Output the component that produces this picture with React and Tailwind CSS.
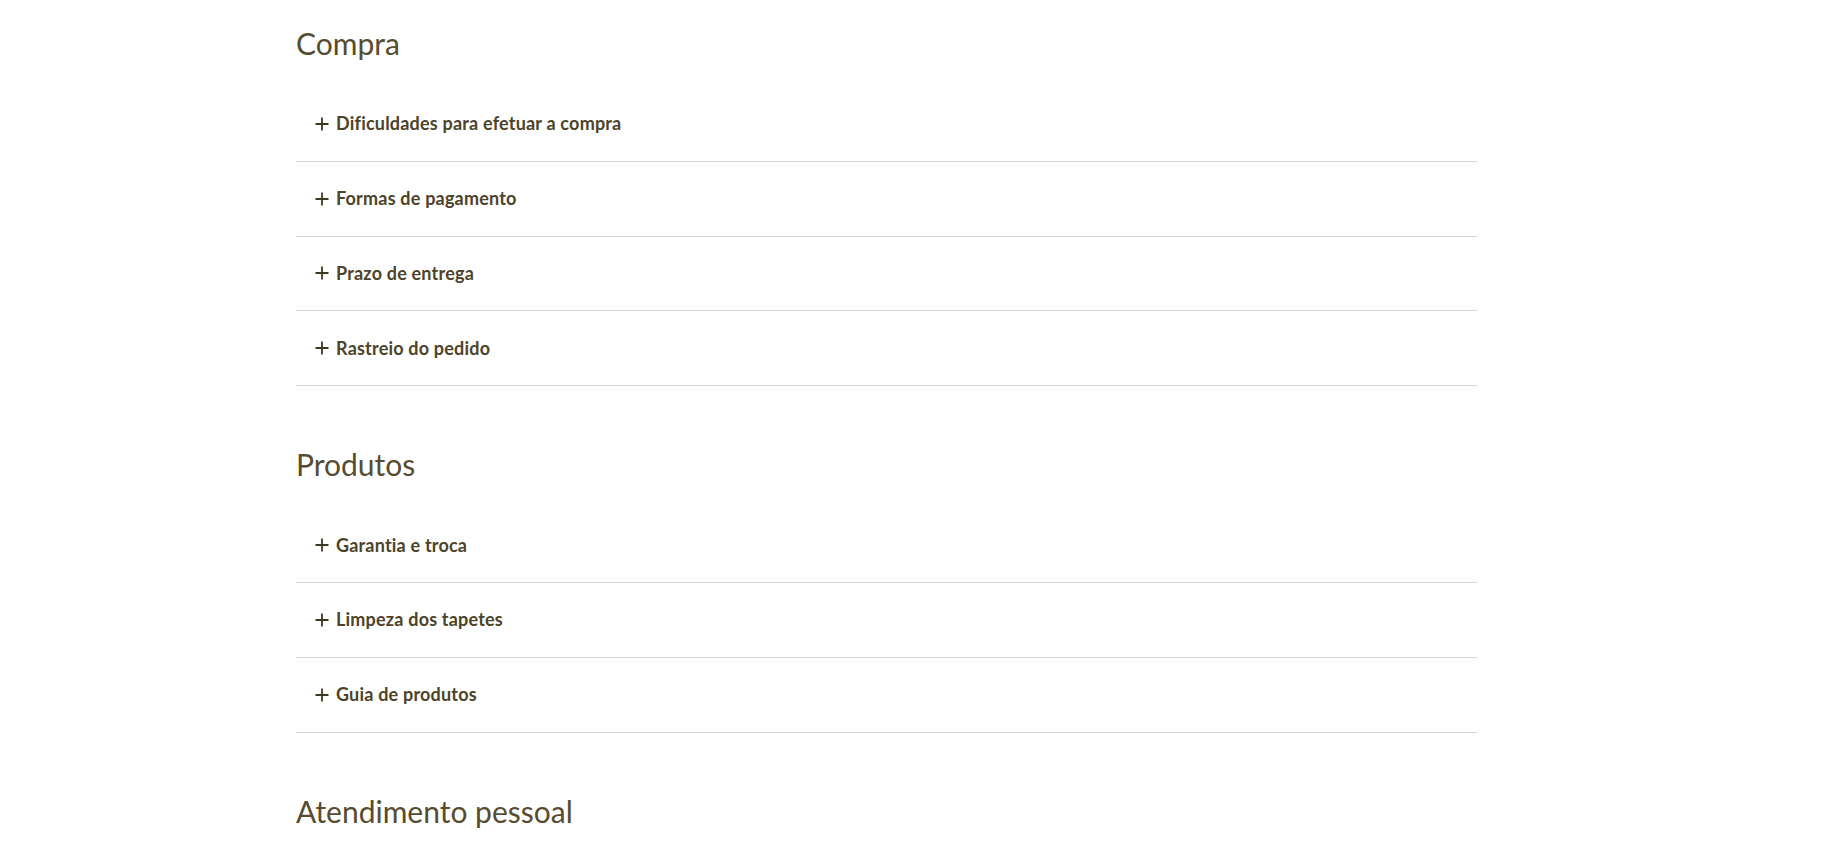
import React from 'react';

const sections = [
  {
    title: 'Compra',
    items: ['Dificuldades para efetuar a compra', 'Formas de pagamento', 'Prazo de entrega', 'Rastreio do pedido'],
  },
  {
    title: 'Produtos',
    items: ['Garantia e troca', 'Limpeza dos tapetes', 'Guia de produtos'],
  },
  {
    title: 'Atendimento pessoal',
    items: [],
  },
];

const Plus = () => (
  <svg width="14" height="14" viewBox="0 0 14 14" className="shrink-0">
    <path d="M7 0.5v13M0.5 7h13" stroke="#3f3720" strokeWidth="1.8" fill="none" />
  </svg>
);

export default function App() {
  return (
    <div className="min-h-screen bg-white font-['Lato','Open_Sans',sans-serif] text-[#4d4329]">
      <div className="ml-[296px] w-[1181px] pt-[25px]">
        {sections.map((section) => (
          <section key={section.title} className="mb-[60px]">
            <h2 className="text-[30px] leading-[36px] font-normal text-[#574c30] mb-[26px]">{section.title}</h2>
            <ul>
              {section.items.map((item) => (
                <li key={item} className="h-[74.8px] border-b border-[#d3d3d3] flex items-center pl-[19px] gap-[7px]">
                  <Plus />
                  <span className="text-[18px] font-bold tracking-[0.2px]">{item}</span>
                </li>
              ))}
            </ul>
          </section>
        ))}
      </div>
    </div>
  );
}
